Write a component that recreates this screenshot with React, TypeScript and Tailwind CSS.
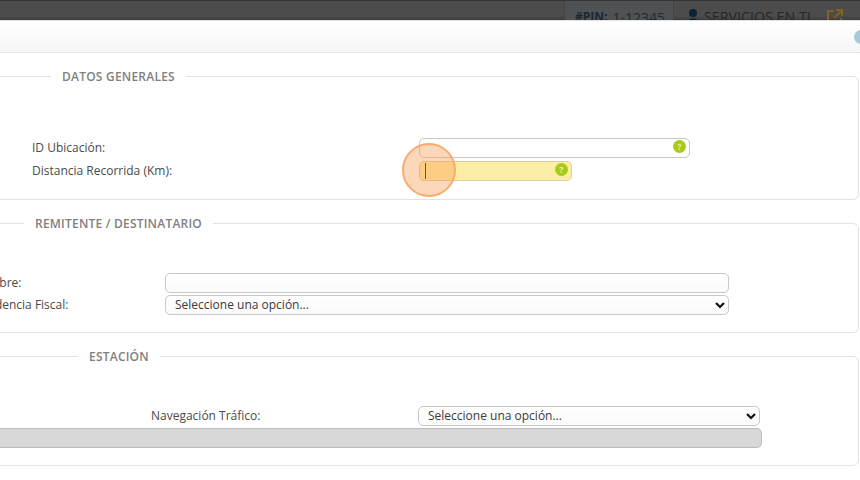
const font = "font-['Open_Sans',sans-serif]";

function HelpIcon() {
  return (
    <span className="absolute right-[4px] top-[2px] flex h-[13px] w-[13px] items-center justify-center rounded-full bg-[#a8cb17] text-[8px] font-bold leading-none text-[#e8f2b0]">
      ?
    </span>
  );
}

function Label({ width, children }: { width: string; children: string }) {
  return <label className={`${width} shrink-0 text-[12px] leading-[18px] text-[#4a4a4a]`}>{children}</label>;
}

function Legend({ margin, children }: { margin: string; children: string }) {
  return (
    <legend className={`${margin} px-[11px] text-[12px] font-semibold leading-[17px] tracking-[0.22px] text-[#808080]`}>
      {children}
    </legend>
  );
}

function Select() {
  return (
    <div className="relative h-[20px] w-full">
      <select className="block h-full w-full appearance-none rounded-[5px] border border-[#c8c8c8] bg-[linear-gradient(180deg,#ffffff_0%,#fafafa_100%)] pl-[9px] text-[12px] leading-[18px] text-[#3a3a3a]">
        <option>Seleccione una opción...</option>
      </select>
      <svg width="10" height="7" viewBox="0 0 10 7" className="pointer-events-none absolute right-[4px] top-[7px] fill-none stroke-[#111] stroke-[2.2]">
        <path d="M1 1l4 4 4-4" />
      </svg>
    </div>
  );
}

export default function App() {
  return (
    <div className={`${font} h-[480px] w-[860px] overflow-hidden bg-white`}>
      {/* top bar, mostly covered by the modal */}
      <div className="flex h-[20px] items-start justify-end overflow-hidden border-t border-[#333] bg-[linear-gradient(180deg,#4c4c4c_0%,#4c4c4c_80%,#3c3c3c_100%)] text-[14px] text-[#2a2a2a]">
        <div className="flex h-[32px] w-[109px] items-center justify-end border-l border-[#444] bg-[#4f5255] pr-[8px]">
          <b className="mr-[5px] text-[12px] font-bold text-[#1d2730]">#PIN:</b>
          <span className="text-[#24292d]">1-12345</span>
        </div>
        <div className="flex h-[32px] w-[187px] items-center border-l border-[#444] pl-[13px]">
          <svg width="12" height="16" viewBox="0 0 12 16" className="mr-[5px] mt-[-1px] shrink-0 fill-[#0d2233]">
            <circle cx="6" cy="4" r="4" />
            <path d="M0 16c0-4 2-6.500 6-6.500s6 2.500 6 6.500z" />
          </svg>
          <span className="whitespace-nowrap text-[14.250px] text-[#262626]">SERVICIOS EN TI</span>
          <svg width="18" height="18" viewBox="0 0 18 18" className="ml-[15px] shrink-0 fill-none stroke-[#7d6420] stroke-2">
            <path d="M8 3H2v13h13v-6M10 2h6v6M16 2L8 10" />
          </svg>
        </div>
      </div>

      {/* modal header */}
      <div className="relative h-[33px] overflow-hidden border-b border-t border-[#e2e2e2] bg-[linear-gradient(180deg,#ffffff_0%,#f6f6f6_100%)]">
        <span className="absolute left-[854px] top-[9px] h-[14px] w-[14px] rounded-full bg-[#a9c8dc]" />
      </div>

      <fieldset className="ml-[-40px] mr-px mt-[15px] rounded-[6px] border border-[#e2e2e2] pb-[18px] pl-[71px] pt-[53px]">
        <Legend margin="ml-[19px]">DATOS GENERALES</Legend>
        <div className="flex flex-col gap-[3px]">
          <div className="flex items-center">
            <Label width="w-[387px]">ID Ubicación:</Label>
            <div className="relative h-[20px] w-[271px]">
              <input className="block h-full w-full rounded-[5px] border border-[#c8c8c8] bg-white" />
              <HelpIcon />
            </div>
          </div>
          <div className="flex items-center">
            <Label width="w-[387px]">Distancia Recorrida (Km):</Label>
            <div className="relative h-[20px] w-[153px]">
              <input className="block h-full w-full rounded-[5px] border border-[#d8d0a0] bg-[#fdeea6]" />
              <HelpIcon />
              <span className="absolute left-[6px] top-[2px] h-[16px] w-px bg-[#222]" />
              <span className="absolute left-[-17px] top-[-18px] h-[54px] w-[54px] rounded-full border-2 border-[#fbaa6e] bg-[#fb9a50]/40" />
            </div>
          </div>
        </div>
      </fieldset>

      <fieldset className="ml-[-40px] mr-px mt-[15px] rounded-[6px] border border-[#e2e2e2] pb-[17px] pl-[11px] pt-[41px]">
        <Legend margin="ml-[52px]">REMITENTE / DESTINATARIO</Legend>
        <div className="flex flex-col gap-[2px]">
          <div className="flex items-center">
            <Label width="w-[193px]">Nombre:</Label>
            <input className="block h-[20px] w-[564px] rounded-[5px] border border-[#c8c8c8] bg-[linear-gradient(180deg,#ffffff_0%,#fafafa_100%)]" />
          </div>
          <div className="flex items-center">
            <Label width="w-[193px]">Residencia Fiscal:</Label>
            <div className="w-[564px]">
              <Select />
            </div>
          </div>
        </div>
      </fieldset>

      <fieldset className="ml-[-40px] mr-px mt-[15px] rounded-[6px] border border-[#e2e2e2] pb-[17px] pt-[41px]">
        <Legend margin="ml-[117px]">ESTACIÓN</Legend>
        <div className="flex flex-col gap-[2px]">
          <div className="flex items-center pl-[190px]">
            <Label width="w-[267px]">Navegación Tráfico:</Label>
            <div className="w-[342px]">
              <Select />
            </div>
          </div>
          <input disabled className="block h-[20px] w-[801px] rounded-[5px] border border-[#bdbdbd] bg-[#d8d8d8]" />
        </div>
      </fieldset>
    </div>
  );
}
